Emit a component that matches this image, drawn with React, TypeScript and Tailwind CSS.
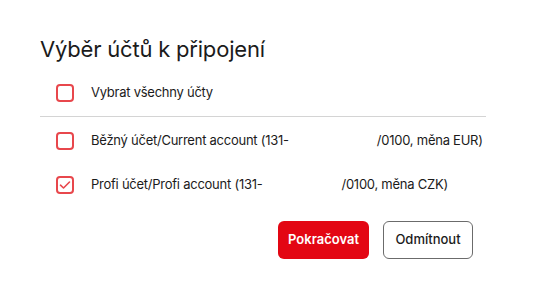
import { useState } from "react";

type Account = { id: string; label: string; suffix: string; gap: string };

const accounts: Account[] = [
  { id: "eur", label: "Běžný účet/Current account (131-", suffix: "/0100, měna EUR)", gap: "w-[88px]" },
  { id: "czk", label: "Profi účet/Profi account (131-", suffix: "/0100, měna CZK)", gap: "w-[79px]" },
];

function Box({ checked }: { checked: boolean }) {
  return (
    <span className="flex h-[18px] w-[18px] shrink-0 items-center justify-center rounded-[4px] border-2 border-[#e8474c] bg-white">
      {checked && (
        <svg width="12" height="10" viewBox="0 0 12 10" fill="none">
          <path d="M1.5 5.2 4.5 8 10.5 2" stroke="#e8474c" strokeWidth="1.6" strokeLinecap="round" strokeLinejoin="round" />
        </svg>
      )}
    </span>
  );
}

export default function App() {
  const [sel, setSel] = useState<Record<string, boolean>>({ eur: false, czk: true });
  const all = accounts.every((a) => sel[a.id]);

  return (
    <div
      className="h-[286px] w-[560px] bg-white px-[40px] pt-[34px] text-[#1b1b1b]"
      style={{ fontFamily: "Inter, 'Noto Sans', sans-serif" }}
    >
      <h1 className="text-[22px] leading-[30px] font-normal tracking-[-0.2px]">Výběr účtů k připojení</h1>

      <div className="mt-[16px] w-[446px]">
        <button
          type="button"
          onClick={() => setSel({ eur: !all, czk: !all })}
          className="flex h-[26px] items-center gap-[17px] pl-[16px] text-[13px] tracking-[-0.25px]"
        >
          <Box checked={all} />
          <span>Vybrat všechny účty</span>
        </button>
        <div className="mt-[10px] h-px bg-[#d4d4d4]" />

        <div className="mt-[11px] flex flex-col gap-[18px]">
          {accounts.map((a) => (
            <button
              key={a.id}
              type="button"
              onClick={() => setSel((s) => ({ ...s, [a.id]: !s[a.id] }))}
              className="flex h-[26px] items-center gap-[17px] pl-[16px] text-[13px] tracking-[-0.25px]"
            >
              <Box checked={!!sel[a.id]} />
              <span className="flex">
                <span>{a.label}</span>
                <span className={a.gap} />
                <span>{a.suffix}</span>
              </span>
            </button>
          ))}
        </div>

        <div className="mt-[23px] flex justify-end gap-[14px] pr-[13px]">
          <button
            type="button"
            className="h-[38px] w-[91px] rounded-[6px] bg-[#e30613] text-[13px] font-semibold text-white"
          >
            Pokračovat
          </button>
          <button
            type="button"
            className="h-[38px] w-[90px] rounded-[6px] border border-[#6b6b6b] bg-white text-[13px] font-medium"
          >
            Odmítnout
          </button>
        </div>
      </div>
    </div>
  );
}
